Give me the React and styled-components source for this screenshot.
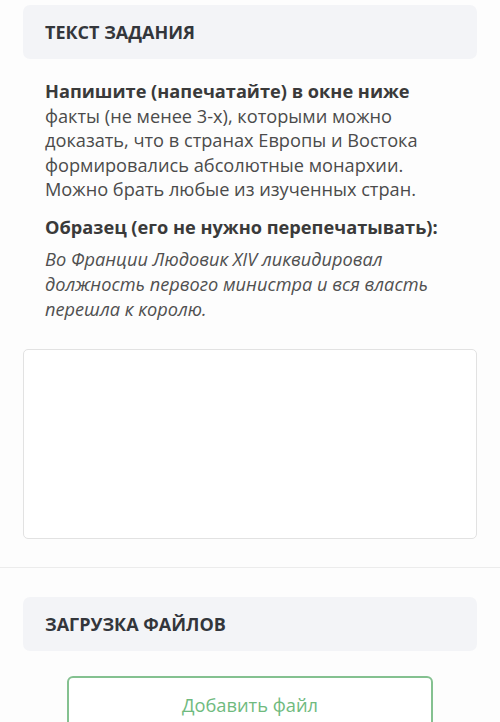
import React from "react";
import styled, { createGlobalStyle } from "styled-components";

const GlobalStyle = createGlobalStyle`
  body {
    margin: 0;
    background: #fdfdfd;
    font-family: "Open Sans", "Noto Sans", sans-serif;
    overflow: hidden;
  }
`;

const Page = styled.div`
  width: 500px;
  height: 722px;
  overflow: hidden;
`;

const Section = styled.section`
  padding: ${(p) => p.$top || 0}px 23px ${(p) => p.$bottom || 0}px;
`;

const SectionHead = styled.div`
  height: 54px;
  display: flex;
  align-items: center;
  padding-left: 22px;
  background: #f3f4f7;
  border-radius: 7px;
`;

const HeadTitle = styled.h2`
  margin: 0;
  font-size: 18px;
  font-weight: 700;
  color: #33363b;
`;

const Body = styled.div`
  padding: 20px 22px 0;
  color: #4b4b4b;
  font-size: 18.2px;
  line-height: 24.5px;
  white-space: nowrap;
`;

const Para = styled.p`
  margin: 0 0 ${(p) => p.$gap || 0}px;
`;

const Strong = styled.b`
  font-weight: 700;
  color: #3a3a3a;
`;

const Example = styled.p`
  margin: 0;
  font-style: italic;
  line-height: 25px;
  color: #505050;
`;

const Answer = styled.textarea`
  display: block;
  box-sizing: border-box;
  width: 100%;
  height: 190px;
  margin-top: 27px;
  border: 1px solid #e2e2e2;
  border-radius: 5px;
  background: #fff;
  resize: none;
  outline: none;
`;

const Divider = styled.hr`
  margin: 28px 0 29px;
  border: 0;
  border-top: 1px solid #ececec;
`;

const ButtonRow = styled.div`
  display: flex;
  justify-content: center;
  padding-top: 25px;
`;

const AddButton = styled.button`
  width: 366px;
  height: 60px;
  border: 2px solid #84c190;
  border-radius: 6px;
  background: #fff;
  color: #6fba7e;
  font-family: "Open Sans", "Noto Sans", sans-serif;
  font-size: 18.3px;
  padding: 0 0 4px;
`;

export default function App() {
  return (
    <Page>
      <GlobalStyle />
      <Section $top={5}>
        <SectionHead>
          <HeadTitle>ТЕКСТ ЗАДАНИЯ</HeadTitle>
        </SectionHead>
        <Body>
          <Para $gap={13}>
            <Strong>Напишите (напечатайте) в окне ниже</Strong>
            <br />
            факты (не менее 3-х), которыми можно
            <br />
            доказать, что в странах Европы и Востока
            <br />
            формировались абсолютные монархии.
            <br />
            Можно брать любые из изученных стран.
          </Para>
          <Para $gap={8}>
            <Strong>Образец (его не нужно перепечатывать):</Strong>
          </Para>
          <Example>
            Во Франции Людовик XIV ликвидировал
            <br />
            должность первого министра и вся власть
            <br />
            перешла к королю.
          </Example>
        </Body>
        <Answer />
      </Section>
      <Divider />
      <Section>
        <SectionHead>
          <HeadTitle>ЗАГРУЗКА ФАЙЛОВ</HeadTitle>
        </SectionHead>
        <ButtonRow>
          <AddButton>Добавить файл</AddButton>
        </ButtonRow>
      </Section>
    </Page>
  );
}
